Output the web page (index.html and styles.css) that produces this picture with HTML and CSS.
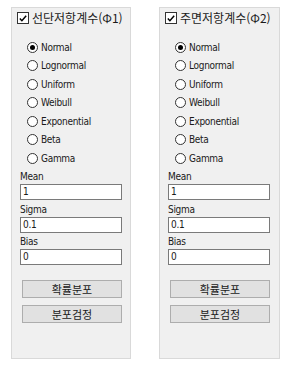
FILE: index.html
```html
<!DOCTYPE html>
<html lang="ko">
<head>
<meta charset="utf-8">
<link rel="stylesheet" href="styles.css">
</head>
<body>
<div class="wrap">
  <section class="panel">
    <label class="head"><span class="cb"><svg viewBox="0 0 11 11" width="11" height="11"><path d="M2 5.5 L4.3 8 L9 2.5" fill="none" stroke="#000" stroke-width="1.6"/></svg></span><span class="ko">선단저항계수(Φ1)</span></label>
    <ul class="radios">
      <li><span class="rb on"></span>Normal</li>
      <li><span class="rb"></span>Lognormal</li>
      <li><span class="rb"></span>Uniform</li>
      <li><span class="rb"></span>Weibull</li>
      <li><span class="rb"></span>Exponential</li>
      <li><span class="rb"></span>Beta</li>
      <li><span class="rb"></span>Gamma</li>
    </ul>
    <div class="fields">
      <div class="lbl">Mean</div><div class="inp">1</div>
      <div class="lbl">Sigma</div><div class="inp">0.1</div>
      <div class="lbl">Bias</div><div class="inp">0</div>
    </div>
    <div class="btns">
      <div class="btn ko">확률분포</div>
      <div class="btn ko">분포검정</div>
    </div>
  </section>
  <section class="panel">
    <label class="head"><span class="cb"><svg viewBox="0 0 11 11" width="11" height="11"><path d="M2 5.5 L4.3 8 L9 2.5" fill="none" stroke="#000" stroke-width="1.6"/></svg></span><span class="ko">주면저항계수(Φ2)</span></label>
    <ul class="radios">
      <li><span class="rb on"></span>Normal</li>
      <li><span class="rb"></span>Lognormal</li>
      <li><span class="rb"></span>Uniform</li>
      <li><span class="rb"></span>Weibull</li>
      <li><span class="rb"></span>Exponential</li>
      <li><span class="rb"></span>Beta</li>
      <li><span class="rb"></span>Gamma</li>
    </ul>
    <div class="fields">
      <div class="lbl">Mean</div><div class="inp">1</div>
      <div class="lbl">Sigma</div><div class="inp">0.1</div>
      <div class="lbl">Bias</div><div class="inp">0</div>
    </div>
    <div class="btns">
      <div class="btn ko">확률분포</div>
      <div class="btn ko">분포검정</div>
    </div>
  </section>
</div>
</body>
</html>
```

FILE: styles.css
```css
html, body {
  margin: 0;
  padding: 0;
  background: #fff;
}
body {
  font-family: "DejaVu Sans Condensed", "Liberation Sans Narrow", "Liberation Sans", sans-serif;
  font-size: 10px;
  letter-spacing: -0.3px;
  color: #1a1a1a;
}
.wrap {
  display: flex;
  gap: 28px;
  padding: 7px 0 0 11px;
}
.panel {
  box-sizing: border-box;
  width: 120px;
  height: 352px;
  background: #f0f0f0;
  border: 1px solid #d9d9d9;
  display: flex;
  flex-direction: column;
}
.panel + .panel { width: 121px; }
.ko {
  font-family: "Noto Sans CJK KR", sans-serif;
  letter-spacing: 0;
}
.head {
  display: flex;
  align-items: center;
  gap: 3px;
  height: 14px;
  margin: 3px 0 0 5px;
  font-size: 12px;
  line-height: 14px;
}
.cb {
  box-sizing: border-box;
  width: 12px;
  height: 12px;
  border: 1px solid #333;
  background: #fff;
  display: flex;
  align-items: center;
  justify-content: center;
}
.radios {
  list-style: none;
  margin: 13px 0 0 15px;
  padding: 0;
}
.radios li {
  display: flex;
  align-items: center;
  gap: 3px;
  height: 18.5px;
}
.rb {
  box-sizing: border-box;
  width: 11px;
  height: 11px;
  border-radius: 50%;
  border: 1px solid #333;
  background: #fff;
  display: flex;
  align-items: center;
  justify-content: center;
}
.rb.on::after {
  content: "";
  width: 5px;
  height: 5px;
  border-radius: 50%;
  background: #000;
}
.fields {
  margin: 0 0 0 8px;
  display: flex;
  flex-direction: column;
}
.lbl {
  height: 15px;
  line-height: 15px;
  margin-top: 1.5px;
}
.inp {
  box-sizing: border-box;
  width: 102px;
  height: 16px;
  background: #fff;
  border: 1px solid #7a7a7a;
  padding-left: 2px;
  line-height: 14px;
}
.btns {
  margin: 15px 0 0 10px;
  display: flex;
  flex-direction: column;
  gap: 7px;
}
.btn {
  box-sizing: border-box;
  width: 100px;
  height: 18px;
  background: #e1e1e1;
  border: 1px solid #adadad;
  text-align: center;
  font-size: 11px;
  line-height: 16px;
}
```
